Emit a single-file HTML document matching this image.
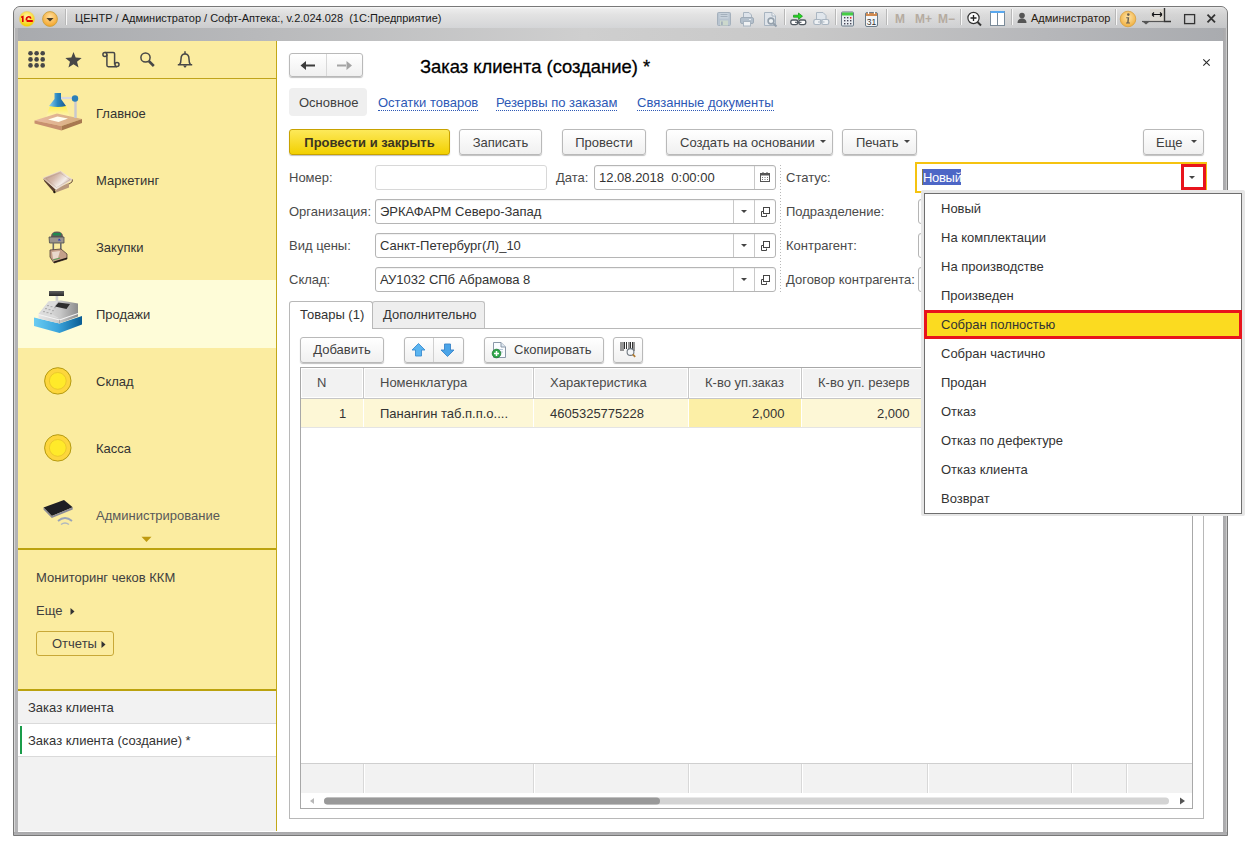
<!DOCTYPE html>
<html><head><meta charset="utf-8">
<style>
*{box-sizing:border-box;margin:0;padding:0}
html,body{width:1246px;height:844px;overflow:hidden;background:#fff;font-family:"Liberation Sans",sans-serif;font-size:13px;color:#333}
.a{position:absolute}
.t{position:absolute;white-space:nowrap;line-height:14px}
#win{left:13px;top:6px;width:1215px;height:830px;border:1px solid #787878;border-radius:7px 7px 0 0;background:#b2b2b4;overflow:hidden}
#ttl{left:0;top:0;width:1213px;height:21px;background:linear-gradient(90deg,rgba(0,0,0,.07),rgba(0,0,0,0) 35%,rgba(0,0,0,0) 65%,rgba(0,0,0,.07)),linear-gradient(#fbfbfb,#ececec 2px,#e2e2e2 8px,#d4d5d7 21px)}
#band{left:0;top:21px;width:1213px;height:14px;background:linear-gradient(90deg,#a8aaae,#b8b9bb 20%,#cfcfcf 47%,#c8c8c8 65%,#b6b7ba 85%,#a9abaf)}
#lf{left:0;top:21px;width:4px;height:808px;background:linear-gradient(90deg,#d6d6d6 0,#d6d6d6 1px,#b4b4b6 1px)}
#rf{left:1209px;top:21px;width:4px;height:808px;background:linear-gradient(90deg,#a8a8aa 0,#b0b0b2 3px,#cacaca 3px)}
#bf{left:0;top:825px;width:1213px;height:4px;background:linear-gradient(#a8a8aa,#b2b2b4 3px,#cccccc 3px)}
#client{left:18px;top:41px;width:1205px;height:791px;background:#fff}
#side{left:18px;top:41px;width:259px;height:790px;background:#fbeca0;border-right:1px solid #c2a818}
.sep{position:absolute;width:1px;background:#b8b8b8;box-shadow:1px 0 0 #f8f8f8}
.wt{font-family:"Liberation Sans",sans-serif;font-size:11px;color:#1a1a1a}
.m{font-weight:bold;font-size:12px;color:#b5aba0}
.side-t{position:absolute;left:96px;font-size:13px;color:#333;white-space:nowrap;line-height:14px}
.hline{position:absolute;height:2px;background:#bba20e}

.btn{position:absolute;height:25px;border:1px solid #b9b9b9;border-radius:3px;background:linear-gradient(#ffffff,#f0f0f0);box-shadow:0 1px 1px rgba(0,0,0,0.25);color:#404040;font-size:13px;line-height:23px;text-align:center;white-space:nowrap}
.inp{position:absolute;height:25px;border:1px solid #b5b5b5;border-radius:3px;background:#fff;box-shadow:inset 0 1px 1px rgba(0,0,0,0.06)}
.lbl{position:absolute;white-space:nowrap;line-height:14px;color:#4a4a4a}
.val{position:absolute;white-space:nowrap;line-height:14px;color:#333}
.lnk{position:absolute;white-space:nowrap;line-height:14px;color:#2d58b5;border-bottom:1px dotted #2d58b5;padding-bottom:0px}
.vdiv{position:absolute;width:1px;background:#c8c8c8}
.dd{position:absolute;width:0;height:0;border-left:3px solid transparent;border-right:3px solid transparent;border-top:3px solid #444}
</style></head><body>
<div id="win" class="a"><div id="ttl" class="a"></div><div id="band" class="a"></div><div id="lf" class="a"></div><div id="rf" class="a"></div><div id="bf" class="a"></div></div>
<div id="client" class="a"></div>
<div id="side" class="a"></div>

<!-- TITLE BAR -->
<svg class="a" style="left:18px;top:10px" width="20" height="18" viewBox="0 0 20 18">
 <defs><radialGradient id="g1c" cx="50%" cy="35%" r="60%"><stop offset="0" stop-color="#fff6b0"/><stop offset="1" stop-color="#f5d000"/></radialGradient>
 <radialGradient id="gdd" cx="50%" cy="35%" r="60%"><stop offset="0" stop-color="#ffe0a0"/><stop offset="1" stop-color="#f5a830"/></radialGradient></defs>
 <circle cx="9" cy="9" r="7.6" fill="url(#g1c)" stroke="#e8c870" stroke-width="0.6"/>
 <path d="M3 6.6 L5.6 5.4 V12 H4 V7.6 L3 8Z" fill="#e00000"/>
 <path d="M7.6 10.6 Q7.2 6.4 10.6 6 Q13.2 5.9 13.6 8.4 L12 8.8 Q11.6 7.4 10.6 7.5 Q9.1 7.7 9.3 10.2Z" fill="#e00000"/>
 <rect x="8.6" y="10" width="6.2" height="2" fill="#e00000"/>
</svg>
<svg class="a" style="left:41px;top:10px" width="20" height="18" viewBox="0 0 20 18">
 <circle cx="9" cy="9" r="7.4" fill="url(#gdd)" stroke="#c8a040" stroke-width="0.9"/>
 <path d="M5.4 8 L12.6 8 L9 11.6Z" fill="#4a3c28"/>
</svg>
<div class="sep" style="left:65px;top:9px;height:16px"></div>
<div class="t wt" style="left:75px;top:11px">ЦЕНТР / Администратор / Софт-Аптека:, v.2.024.028&nbsp; (1С:Предприятие)</div>

<!-- title right icons -->
<svg class="a" style="left:716px;top:11px" width="240" height="17" viewBox="0 0 240 17">
 <!-- save -->
 <rect x="1.5" y="1.5" width="13" height="13" rx="1" fill="#b8c4d0" stroke="#a4b0bc"/>
 <rect x="3.5" y="2" width="9" height="5.5" fill="#c8d2dc"/>
 <path d="M4.5 3.5 H11.5 M4.5 5.5 H11.5" stroke="#a4b0bc" stroke-width="1"/>
 <rect x="4" y="9.5" width="8" height="5" fill="#ccd8cc"/>
 <rect x="5" y="10.5" width="1.8" height="3.5" fill="#a4b0bc"/>
 <!-- print -->
 <path d="M27.5 1.5 H33 L35.5 4 V7 H27.5Z" fill="#dde3ea" stroke="#a8b4c0"/>
 <rect x="24.5" y="6.5" width="13" height="6" rx="1.5" fill="#b4c0cc" stroke="#a0acb8"/>
 <rect x="27.5" y="10.5" width="7" height="4.5" fill="#f0f2f4" stroke="#a8b4c0"/>
 <path d="M33 8.5 H35" stroke="#e8ecf0" stroke-width="1"/>
 <!-- preview -->
 <path d="M48.5 1.5 H56 L59.5 5 V14.5 H48.5Z" fill="#dfe4ea" stroke="#a8b4c0"/>
 <path d="M56 1.5 V5 H59.5" fill="#f4f6f8" stroke="#a8b4c0"/>
 <circle cx="55" cy="10" r="2.9" fill="#eef2f4" stroke="#94a0ac" stroke-width="1.6"/>
 <path d="M57.2 12.2 L60.5 15.5" stroke="#94a0ac" stroke-width="2"/>
 <!-- link green -->
 <path d="M77.5 4.2 H82.5 V2 L86.5 5.2 L82.5 8.4 V6.2 H77.5Z" fill="#22dd22" stroke="#148a14" stroke-width="0.7"/>
 <rect x="74.8" y="9" width="7" height="4.6" rx="1.8" fill="#fff" stroke="#505860" stroke-width="1.3"/>
 <rect x="82.8" y="9" width="7" height="4.6" rx="1.8" fill="#fff" stroke="#505860" stroke-width="1.3"/>
 <path d="M79 11.3 H85.5" stroke="#505860" stroke-width="1.1"/>
 <!-- link gray -->
 <path d="M100.5 1.5 H107 L110 4.5 V9 H100.5Z" fill="#e0e6ec" stroke="#aab6c2"/>
 <rect x="97.8" y="8.5" width="7" height="5" rx="1.8" fill="#eef1f4" stroke="#a8b4c0" stroke-width="1.2"/>
 <rect x="105.8" y="8.5" width="7" height="5" rx="1.8" fill="#eef1f4" stroke="#a8b4c0" stroke-width="1.2"/>
 <path d="M102 11 H108.5" stroke="#a8b4c0" stroke-width="1"/>
 <!-- calc -->
 <rect x="125.5" y="1" width="12" height="14" rx="1" fill="#e8ecf0" stroke="#6a7a88"/>
 <rect x="126" y="1.5" width="11" height="3" fill="#44cc44"/>
 <g fill="#445"><rect x="128" y="6" width="1.4" height="1.4"/><rect x="131" y="6" width="1.4" height="1.4"/><rect x="128" y="9" width="1.4" height="1.4"/><rect x="131" y="9" width="1.4" height="1.4"/><rect x="134" y="9" width="1.4" height="1.4"/><rect x="128" y="12" width="1.4" height="1.4"/><rect x="131" y="12" width="1.4" height="1.4"/><rect x="134" y="12" width="1.4" height="1.4"/></g>
 <rect x="134" y="6" width="1.4" height="1.6" fill="#e22"/>
 <!-- calendar -->
 <rect x="149.5" y="1.5" width="12" height="14" rx="1.5" fill="#f4f6f8" stroke="#6a7a88"/>
 <rect x="150" y="2" width="11" height="3" fill="#d08a50"/><path d="M152.5 0.5 V3 M158.5 0.5 V3" stroke="#fff" stroke-width="1.2"/>
 <text x="155.5" y="13.6" font-family="Liberation Sans" font-size="8.5" text-anchor="middle" fill="#333">31</text>
</svg>
<div class="sep" style="left:784px;top:9px;height:16px"></div>
<div class="sep" style="left:835px;top:9px;height:16px"></div>
<div class="sep" style="left:886px;top:9px;height:16px"></div>
<div class="t m" style="left:895px;top:12px">M</div>
<div class="t m" style="left:915px;top:12px">M+</div>
<div class="t m" style="left:938px;top:12px">M&#8722;</div>
<div class="sep" style="left:960px;top:9px;height:16px"></div>
<svg class="a" style="left:965px;top:10px" width="50" height="18" viewBox="0 0 50 18">
 <circle cx="8.5" cy="8" r="5.6" fill="#fafafa" stroke="#333" stroke-width="1.2"/>
 <path d="M8.5 5 V11 M5.5 8 H11.5" stroke="#222" stroke-width="1.3"/>
 <path d="M12.5 12 L16 15.5" stroke="#333" stroke-width="2"/>
 <rect x="25.5" y="1.5" width="14" height="14" fill="#fff" stroke="#7a8a98"/>
 <rect x="25.5" y="1" width="14" height="2" fill="#58a8f0"/>
 <path d="M32.5 3 V15.5" stroke="#7a8a98"/>
</svg>
<div class="sep" style="left:1011px;top:9px;height:16px"></div>
<svg class="a" style="left:1017px;top:12px" width="11" height="12" viewBox="0 0 11 12">
 <circle cx="5" cy="3.6" r="2.8" fill="#555"/>
 <path d="M0.5 11 Q0.5 6.5 5 6.5 Q9.5 6.5 9.5 11Z" fill="#555"/>
</svg>
<div class="t wt" style="left:1031px;top:11px;color:#2a2010">Администратор</div>
<div class="sep" style="left:1115px;top:9px;height:16px"></div>
<svg class="a" style="left:1119px;top:10px" width="18" height="18" viewBox="0 0 18 18">
 <defs><radialGradient id="ginf" cx="50%" cy="40%" r="60%"><stop offset="0" stop-color="#ffe4a8"/><stop offset="1" stop-color="#f0b040"/></radialGradient></defs>
 <circle cx="9" cy="9" r="7.8" fill="url(#ginf)" stroke="#d8a040" stroke-width="0.8"/>
 <circle cx="9.3" cy="4.6" r="1.3" fill="#6a6050"/>
 <path d="M7.2 7.2 H10.2 L9.6 12.6 H11 V13.6 H7 V12.6 H8.2 L8.6 8.2 H7.2Z" fill="#6a6050"/>
</svg>
<svg class="a" style="left:1140px;top:7px" width="34" height="20" viewBox="0 0 34 20">
 <rect x="10" y="2" width="14" height="12" fill="#dcd8d0"/>
 <path d="M12 7.5 H22 M12 7.5 L14 5.5 M12 7.5 L14 9.5 M22 7.5 L20 5.5 M22 7.5 L20 9.5" stroke="#111" stroke-width="1.1" fill="none"/>
 <path d="M24.5 1 V14.5 H31" stroke="#333" stroke-width="1.4" fill="none"/>
 <path d="M2 14.5 H24" stroke="#555" stroke-width="1.2"/>
 <path d="M3 15 L9 15 L6 17.5Z" fill="#555"/>
</svg>
<svg class="a" style="left:1183px;top:13px" width="36" height="13" viewBox="0 0 36 13">
 <rect x="1.6" y="1.6" width="10" height="9" fill="none" stroke="#333" stroke-width="1.3"/>
 <path d="M24.5 1.6 L32 9.4 M32 1.6 L24.5 9.4" stroke="#333" stroke-width="1.8"/>
</svg>

<!-- SIDEBAR -->
<svg class="a" style="left:24px;top:47px" width="175" height="26" viewBox="24 47 175 26">
 <g fill="#474747">
  <circle cx="30.5" cy="53.3" r="2.3"/><circle cx="36.6" cy="53.3" r="2.3"/><circle cx="42.7" cy="53.3" r="2.3"/>
  <circle cx="30.5" cy="59.4" r="2.3"/><circle cx="36.6" cy="59.4" r="2.3"/><circle cx="42.7" cy="59.4" r="2.3"/>
  <circle cx="30.5" cy="65.4" r="2.3"/><circle cx="36.6" cy="65.4" r="2.3"/><circle cx="42.7" cy="65.4" r="2.3"/>
  <path d="M73.50 52.00 L75.67 57.61 L81.68 57.94 L77.02 61.74 L78.55 67.56 L73.50 64.30 L68.45 67.56 L69.98 61.74 L65.32 57.94 L71.33 57.61Z"/>
 </g>
 <g fill="none" stroke="#474747" stroke-width="1.5">
  <circle cx="104.9" cy="54.4" r="2"/>
  <path d="M104.9 52.4 H113.2 Q114.6 52.4 114.6 53.8 V64.6"/>
  <path d="M106.9 54.4 V65.3 Q106.9 66.7 108.3 66.7 H117"/>
  <circle cx="117" cy="64.6" r="2"/>
  <circle cx="145.5" cy="57.5" r="4.6"/>
  <path d="M148.8 61 L153.8 66" stroke-width="2.6"/>
  <path d="M177.8 64.8 H192.2 M179.5 64.8 Q181 63 181 59 Q181 54 185 54 Q189 54 189 59 Q189 63 190.5 64.8"/>
  <path d="M185 51.2 V54"/>
 </g>
 <path d="M183 65.5 H187 L185 68Z" fill="#474747"/>
</svg>
<div class="hline" style="left:18px;top:78px;width:258px;height:1px;background:#c0a41a"></div>

<div class="a" style="left:18px;top:280px;width:258px;height:68px;background:#fefcd8"></div>

<div class="side-t" style="top:107px">Главное</div>
<div class="side-t" style="top:174px">Маркетинг</div>
<div class="side-t" style="top:241px">Закупки</div>
<div class="side-t" style="top:308px">Продажи</div>
<div class="side-t" style="top:375px">Склад</div>
<div class="side-t" style="top:442px">Касса</div>
<div class="side-t" style="top:509px;color:#585858">Администрирование</div>
<svg class="a" style="left:141px;top:536px" width="11" height="7"><path d="M0.5 0.8 H10.5 L5.5 6Z" fill="#bf9a10"/></svg>
<div class="hline" style="left:18px;top:548px;width:258px"></div>
<div class="t" style="left:36px;top:571px;color:#404040">Мониторинг чеков ККМ</div>
<div class="t" style="left:36px;top:604px;color:#404040">Еще</div>
<svg class="a" style="left:70px;top:608px" width="5" height="7"><path d="M0.5 0 L4.5 3.5 L0.5 7Z" fill="#333"/></svg>
<div class="a" style="left:36px;top:631px;width:78px;height:25px;border:1px solid #c8a838;border-radius:3px;background:#fbeca0"></div>
<div class="t" style="left:52px;top:637px;color:#404040">Отчеты</div>
<svg class="a" style="left:101px;top:641px" width="5" height="7"><path d="M0.5 0 L4.5 3.5 L0.5 7Z" fill="#333"/></svg>
<div class="hline" style="left:18px;top:689px;width:258px"></div>
<div class="a" style="left:18px;top:691px;width:258px;height:140px;background:#f2f2f2"></div>
<div class="a" style="left:18px;top:723px;width:258px;height:1px;background:#dadada"></div>
<div class="a" style="left:18px;top:724px;width:258px;height:32px;background:#fff"></div>
<div class="a" style="left:18px;top:756px;width:258px;height:1px;background:#dadada"></div>
<div class="a" style="left:20px;top:726px;width:2px;height:28px;background:#1a9c4a"></div>
<div class="t" style="left:28px;top:701px;color:#333">Заказ клиента</div>
<div class="t" style="left:28px;top:734px;color:#333">Заказ клиента (создание) *</div>

<!-- SIDEBAR ICONS -->
<svg class="a" style="left:30px;top:88px" width="56" height="48" viewBox="30 88 56 48">
 <defs>
  <linearGradient id="lcone" x1="0" y1="0" x2="0" y2="1"><stop offset="0" stop-color="#ffee40" stop-opacity="0.9"/><stop offset="1" stop-color="#fff8c0" stop-opacity="0.6"/></linearGradient>
  <linearGradient id="lshade" x1="0" y1="0" x2="1" y2="0"><stop offset="0" stop-color="#8cd0f0"/><stop offset="0.5" stop-color="#2a88c0"/><stop offset="1" stop-color="#1a5a90"/></linearGradient>
  <linearGradient id="board" x1="0" y1="0" x2="1" y2="0"><stop offset="0" stop-color="#e8b8a0"/><stop offset="1" stop-color="#d8b080"/></linearGradient>
 </defs>
 <path d="M50 106 L66 106 L70 117 L46 117Z" fill="url(#lcone)"/>
 <path d="M34.5 120.5 L57 113.5 L82 119 L61.5 126Z" fill="url(#board)"/>
 <path d="M34.5 120.5 V123.5 L61.5 130.5 V126Z" fill="#c89070"/>
 <path d="M61.5 126 V130.5 L82 123 V119Z" fill="#a87850"/>
 <path d="M48 119.5 L57.5 116.5 L68 118.5 L58.5 122Z" fill="#fffef0"/>
 <path d="M61 98 H75" stroke="#d8d8e0" stroke-width="2.2"/>
 <path d="M75.5 99 V118" stroke="#c8c8d0" stroke-width="2.4"/>
 <circle cx="75" cy="98.5" r="3.2" fill="#2a80b8"/>
 <path d="M54.5 93 H61 V99 L66 106 Q58 108 49 106 L54.5 99Z" fill="url(#lshade)"/>
</svg>
<svg class="a" style="left:40px;top:168px" width="36" height="28" viewBox="40 168 36 28">
 <defs><linearGradient id="mkt" x1="0" y1="0" x2="1" y2="0.6"><stop offset="0" stop-color="#b48e7c"/><stop offset="0.45" stop-color="#d4b8aa"/><stop offset="0.75" stop-color="#f4eeea"/><stop offset="1" stop-color="#c0a090"/></linearGradient></defs>
 <path d="M56 188 L69 183 L69 187.5 L56 192.5Z" fill="#b8987c"/>
 <path d="M43 178 L44.5 181.5 L54 192.5 L56 189.5Z" fill="#5a4030"/>
 <path d="M43 178 L60.5 171 L72.5 179.5 L56 189.5Z" fill="url(#mkt)" stroke="#f0e4dc" stroke-width="0.6"/>
 <path d="M46 178.5 L60 172.8 L70 179.6 L56.5 187.5Z" fill="none" stroke="#a88878" stroke-width="0.5" opacity="0.6"/>
 <path d="M72.5 179.5 L72 182 L69 184" fill="none" stroke="#6a5040" stroke-width="1"/>
 <circle cx="54.5" cy="192" r="1.2" fill="#201810"/>
</svg>
<svg class="a" style="left:46px;top:229px" width="24" height="36" viewBox="46 229 24 36">
 <path d="M51 237 Q51 231.5 57 231.5 Q63 231.5 63 237Z" fill="#605a58"/>
 <rect x="53" y="233" width="8" height="2.5" fill="#208850"/>
 <path d="M49 237 H64 V243 H49.5Z" fill="#9a948e" stroke="#4a4a4a" stroke-width="0.8"/>
 <path d="M59 238.5 L61 240.5 H58Z" fill="#2030c0"/>
 <rect x="52.5" y="243" width="1.6" height="8" fill="#6a6a6a"/>
 <rect x="60" y="243" width="1.6" height="8" fill="#6a6a6a"/>
 <path d="M50 250 L61 249 L67 254 V259 L54 263 L50 257Z" fill="#c4a08a"/>
 <path d="M52 252 L60 251 L58 258 L53 259Z" fill="#e8d8cc"/>
 <path d="M50 250 L61 249 L67 254 V259 L54 263 L50 257Z" fill="none" stroke="#504038" stroke-width="0.8"/>
 <path d="M54 261.5 L67 257.5 V259 L54 263Z" fill="#201810"/>
 <path d="M53 260 L60 258" stroke="#40a050" stroke-width="0.8"/>
</svg>
<svg class="a" style="left:32px;top:289px" width="52" height="46" viewBox="32 289 52 46">
 <defs>
  <linearGradient id="reg" x1="0" y1="0" x2="1" y2="0"><stop offset="0" stop-color="#e8e8e8"/><stop offset="0.55" stop-color="#c8c8c8"/><stop offset="1" stop-color="#8c8c8c"/></linearGradient>
  <linearGradient id="drw" x1="0" y1="0" x2="1" y2="0"><stop offset="0" stop-color="#6accf2"/><stop offset="0.5" stop-color="#3aa4dc"/><stop offset="1" stop-color="#0a5c94"/></linearGradient>
  <linearGradient id="disp" x1="0" y1="0" x2="0" y2="1"><stop offset="0" stop-color="#606060"/><stop offset="1" stop-color="#282828"/></linearGradient>
 </defs>
 <rect x="49" y="291" width="15" height="5" fill="url(#disp)"/>
 <rect x="55.6" y="296" width="2.6" height="4.8" fill="#d0d0d0"/>
 <path d="M34 317.5 L59.5 323.5 L82 316 V324.5 L59.5 333 L34 326Z" fill="url(#drw)"/>
 <path d="M38.5 314 L48.5 301.5 L61 300.5 L78 303.5 V316.5 L59.5 323.5 L38.5 318.5Z" fill="url(#reg)"/>
 <path d="M38.5 314 L48.5 301.5 L58 301 L50 313 L59.5 318.5 Z" fill="#dcdcdc"/>
 <g fill="#b0b0b0"><rect x="43" y="311" width="2" height="1.2"/><rect x="46.5" y="312" width="2" height="1.2"/><rect x="50" y="313" width="2" height="1.2"/><rect x="45" y="308" width="2" height="1.2"/><rect x="48.5" y="309" width="2" height="1.2"/><rect x="52" y="310" width="2" height="1.2"/><rect x="47" y="305" width="2" height="1.2"/><rect x="50.5" y="306" width="2" height="1.2"/><rect x="54" y="307" width="2" height="1.2"/></g>
 <path d="M55 306.5 L58.5 302.5 L70 304 L66.5 309Z" fill="#2e2e2e"/>
 <path d="M38.5 314.5 L59.5 320 L78 313.5" fill="none" stroke="#f4f4f4" stroke-width="1.1"/>
 <path d="M59.5 320 V323.5" stroke="#a0a0a0" stroke-width="0.8"/>
</svg>
<svg class="a" style="left:40px;top:365px" width="36" height="100" viewBox="40 365 36 100">
 <circle cx="57.8" cy="380.9" r="13.2" fill="#fdd63c" stroke="#b49a12" stroke-width="1"/>
 <circle cx="57.8" cy="380.9" r="8.4" fill="#ffea2a" stroke="#e6c428" stroke-width="0.8"/>
 <circle cx="57.8" cy="447.9" r="13.2" fill="#fdd63c" stroke="#b49a12" stroke-width="1"/>
 <circle cx="57.8" cy="447.9" r="8.4" fill="#ffea2a" stroke="#e6c428" stroke-width="0.8"/>
</svg>
<svg class="a" style="left:40px;top:497px" width="36" height="32" viewBox="40 497 36 32">
 <path d="M43.5 507.5 L64 500 L72.7 507.3 L51.8 516Z" fill="#1e1e24"/>
 <path d="M43.5 507.5 V509.5 L51.8 518 L72.7 509.5 V507.3 L51.8 516Z" fill="#8a8a98"/>
 <path d="M58 521 Q65 515 72 521" fill="none" stroke="#9aa4b8" stroke-width="1.8"/>
 <path d="M61 524.5 Q65 521.5 69 524.5" fill="none" stroke="#b0b8c0" stroke-width="1.5"/>
</svg>

<!-- MAIN FORM -->
<div class="btn" style="left:289px;top:53px;width:74px;height:24px"></div>
<div class="vdiv" style="left:326px;top:54px;height:22px;background:#d8d8d8"></div>
<svg class="a" style="left:298px;top:59px" width="60" height="12">
 <path d="M7 5.4 H17 V7.6 H7Z M2.5 6.5 L8 2 V11Z" fill="#3c3c3c"/>
 <path d="M39 5.4 H49 V7.6 H39Z M54 6.5 L48.5 2 V11Z" fill="#a4a4a4"/>
</svg>
<div class="t" style="left:420px;top:57px;font-size:18.4px;line-height:20px;color:#000;-webkit-text-stroke:0.3px #000">Заказ клиента (создание) *</div>
<svg class="a" style="left:1202px;top:58px" width="10" height="10"><path d="M1.3 1.3 L7.7 7.7 M7.7 1.3 L1.3 7.7" stroke="#2a2a2a" stroke-width="1.1"/></svg>

<div class="a" style="left:289px;top:88px;width:78px;height:28px;background:#efefef;border-radius:4px"></div>
<div class="val" style="left:299px;top:96px;color:#404040">Основное</div>
<div class="lnk" style="left:378px;top:96px">Остатки товаров</div>
<div class="lnk" style="left:496px;top:96px">Резервы по заказам</div>
<div class="lnk" style="left:637px;top:96px">Связанные документы</div>

<div class="btn" style="left:289px;top:129px;height:26px;line-height:26px;width:161px;border-color:#c8a200;background:linear-gradient(#fde95a,#f2d000);font-weight:bold;color:#3b3520">Провести и закрыть</div>
<div class="btn" style="left:459px;top:129px;height:26px;line-height:26px;width:83px">Записать</div>
<div class="btn" style="left:562px;top:129px;height:26px;line-height:26px;width:84px">Провести</div>
<div class="btn" style="left:666px;top:129px;height:26px;line-height:26px;width:167px;text-align:left;padding-left:13px">Создать на основании</div>
<div class="dd" style="left:820px;top:140px"></div>
<div class="btn" style="left:842px;top:129px;height:26px;line-height:26px;width:75px;text-align:left;padding-left:13px">Печать</div>
<div class="dd" style="left:904px;top:140px"></div>
<div class="btn" style="left:1143px;top:129px;height:26px;line-height:26px;width:61px;text-align:left;padding-left:12px">Еще</div>
<div class="dd" style="left:1191px;top:140px"></div>

<div class="lbl" style="left:289px;top:171px">Номер:</div>
<div class="inp" style="left:375px;top:165px;width:172px;height:25px;border-color:#d8d8d8;box-shadow:none"></div>
<div class="lbl" style="left:556px;top:171px">Дата:</div>
<div class="inp" style="left:594px;top:165px;width:182px;height:25px"></div>
<div class="vdiv" style="left:754px;top:166px;height:23px"></div>
<svg class="a" style="left:760px;top:172px" width="10" height="10"><rect x="0.5" y="1.5" width="9" height="8" fill="#fff" stroke="#555"/><rect x="0.5" y="1.5" width="9" height="2" fill="#555"/><g fill="#777"><rect x="2" y="5" width="1" height="1"/><rect x="4.5" y="5" width="1" height="1"/><rect x="7" y="5" width="1" height="1"/><rect x="2" y="7" width="1" height="1"/><rect x="4.5" y="7" width="1" height="1"/><rect x="7" y="7" width="1" height="1"/></g><path d="M3 0 V2 M7 0 V2" stroke="#555"/></svg>
<div class="val" style="left:599px;top:171px">12.08.2018&nbsp; 0:00:00</div>

<div class="lbl" style="left:289px;top:205px">Организация:</div>
<div class="inp" style="left:375px;top:199px;width:401px;height:25px"></div>
<div class="val" style="left:380px;top:205px">ЭРКАФАРМ Северо-Запад</div>
<div class="lbl" style="left:289px;top:239px">Вид цены:</div>
<div class="inp" style="left:375px;top:233px;width:401px;height:25px"></div>
<div class="val" style="left:380px;top:239px">Санкт-Петербург(Л)_10</div>
<div class="lbl" style="left:289px;top:273px">Склад:</div>
<div class="inp" style="left:375px;top:267px;width:401px;height:25px"></div>
<div class="val" style="left:380px;top:273px">АУ1032 СПб Абрамова 8</div>
<div class="vdiv" style="left:733px;top:200px;height:23px"></div><div class="vdiv" style="left:754px;top:200px;height:23px"></div><div class="dd" style="left:741px;top:210px"></div><svg class="a" style="left:760px;top:206px" width="11" height="11"><path d="M3.5 5.5 H1.5 V10.5 H6.5 V8.5" fill="none" stroke="#444"/><rect x="3.5" y="1.5" width="6" height="6" fill="#fff" stroke="#444"/></svg>
<div class="vdiv" style="left:733px;top:234px;height:23px"></div><div class="vdiv" style="left:754px;top:234px;height:23px"></div><div class="dd" style="left:741px;top:244px"></div><svg class="a" style="left:760px;top:240px" width="11" height="11"><path d="M3.5 5.5 H1.5 V10.5 H6.5 V8.5" fill="none" stroke="#444"/><rect x="3.5" y="1.5" width="6" height="6" fill="#fff" stroke="#444"/></svg>
<div class="vdiv" style="left:733px;top:268px;height:23px"></div><div class="vdiv" style="left:754px;top:268px;height:23px"></div><div class="dd" style="left:741px;top:278px"></div><svg class="a" style="left:760px;top:274px" width="11" height="11"><path d="M3.5 5.5 H1.5 V10.5 H6.5 V8.5" fill="none" stroke="#444"/><rect x="3.5" y="1.5" width="6" height="6" fill="#fff" stroke="#444"/></svg>

<div class="a" style="left:780px;top:165px;width:1px;height:128px;background-image:linear-gradient(#b8b8b8 50%,transparent 50%);background-size:1px 3px"></div>
<div class="lbl" style="left:786px;top:171px">Статус:</div>
<div class="lbl" style="left:786px;top:205px">Подразделение:</div>
<div class="lbl" style="left:786px;top:239px">Контрагент:</div>
<div class="lbl" style="left:786px;top:273px">Договор контрагента:</div>
<div class="inp" style="left:918px;top:199px;width:20px;height:25px"></div>
<div class="inp" style="left:918px;top:233px;width:20px;height:25px"></div>
<div class="inp" style="left:918px;top:267px;width:20px;height:25px"></div>
<div class="a" style="left:915px;top:162px;width:292px;height:31px;border:2px solid #f5c310;border-right-width:1px;background:#fff"></div>
<div class="a" style="left:922px;top:169px;width:39px;height:16px;background:#4d66c6"></div>
<div class="val" style="left:923px;top:171px;color:#fff;letter-spacing:-0.3px">Новый</div>
<div class="a" style="left:922px;top:169px;width:1px;height:16px;background:#8a7a40"></div>
<div class="a" style="left:1181px;top:164px;width:25px;height:26px;border:3px solid #e8141c"></div>
<div class="dd" style="left:1189px;top:176px"></div>

<!-- PAGES -->
<div class="a" style="left:289px;top:328px;width:915px;height:491px;border:1px solid #b8b8b8;border-top-color:#b8b8b8"></div>
<div class="a" style="left:372px;top:301px;width:113px;height:27px;background:#eeeeee;border:1px solid #c0c0c0;border-bottom:none;border-radius:3px 3px 0 0"></div>
<div class="a" style="left:289px;top:301px;width:84px;height:28px;background:#fff;border:1px solid #b8b8b8;border-bottom:none;border-radius:3px 3px 0 0"></div>
<div class="val" style="left:300px;top:308px">Товары (1)</div>
<div class="val" style="left:383px;top:308px">Дополнительно</div>

<div class="btn" style="left:300px;top:337px;width:84px;height:26px;line-height:24px">Добавить</div>
<div class="btn" style="left:404px;top:337px;width:60px;height:26px"></div>
<div class="vdiv" style="left:433px;top:338px;height:24px;background:#d0d0d0"></div>
<svg class="a" style="left:410px;top:342px" width="48" height="16">
 <path d="M8.5 1.5 L15 8 H11.5 V14 H5.5 V8 H2Z" fill="#5ab4f0" stroke="#3a8cd0" stroke-width="0.9" stroke-linejoin="round"/>
 <path d="M37.5 14.5 L44 8 H40.5 V2 H34.5 V8 H31Z" fill="#4aa4e8" stroke="#3a84c8" stroke-width="0.9" stroke-linejoin="round"/>
</svg>
<div class="btn" style="left:484px;top:337px;width:120px;height:26px;line-height:24px;text-align:left;padding-left:29px">Скопировать</div>
<svg class="a" style="left:490px;top:340px" width="18" height="19">
 <path d="M3.5 2.5 H11 L15.5 7 V17.5 H3.5Z" fill="#fafcff" stroke="#8a98a8"/>
 <path d="M11 2.5 V7 H15.5" fill="#dde6f0" stroke="#8a98a8"/>
 <path d="M6 9.5 H13 M6 12 H13" stroke="#b8c8d8" stroke-width="1"/>
 <circle cx="6.5" cy="13.5" r="4.3" fill="#2fa84a" stroke="#1c7a30" stroke-width="0.8"/>
 <path d="M6.5 11 V16 M4 13.5 H9" stroke="#fff" stroke-width="1.5"/>
</svg>
<div class="btn" style="left:613px;top:337px;width:30px;height:26px"></div>
<svg class="a" style="left:619px;top:340px" width="18" height="19">
 <path d="M2 2 V11 M4 2 V11 M5.5 2 V9 M7.5 2 V9 M10 2 V9 M11.5 2 V9 M13.5 2 V11 M15 2 V11" stroke="#333" stroke-width="1"/>
 <circle cx="11.5" cy="12" r="3.4" fill="#f4f6f8" stroke="#707880" stroke-width="1.1"/>
 <path d="M13.8 14.4 L16.2 16.8" stroke="#b07a30" stroke-width="1.8"/>
</svg>

<!-- TABLE -->
<div class="a" style="left:300px;top:367px;width:893px;height:442px;border:1px solid #a8a8a8;background:#fff"></div>
<div class="a" style="left:301px;top:368px;width:891px;height:31px;background:#fff;border-bottom:1px solid #c6c6c6"></div>
<div class="a" style="left:301px;top:399px;width:891px;height:29px;background:#fff;border-bottom:1px solid #e4e4e4"></div>
<div class="a" style="left:302px;top:369px;width:60px;height:28px;background:#f2f2f2"></div><div class="a" style="left:301px;top:399px;width:62px;height:28px;background:#fdf7d6"></div>
<div class="a" style="left:365px;top:369px;width:167px;height:28px;background:#f2f2f2"></div><div class="a" style="left:364px;top:399px;width:169px;height:28px;background:#fdf7d6"></div>
<div class="a" style="left:535px;top:369px;width:152px;height:28px;background:#f2f2f2"></div><div class="a" style="left:534px;top:399px;width:154px;height:28px;background:#fdf7d6"></div>
<div class="a" style="left:690px;top:369px;width:110px;height:28px;background:#f2f2f2"></div><div class="a" style="left:689px;top:399px;width:112px;height:28px;background:#fcefa6"></div>
<div class="a" style="left:803px;top:369px;width:123px;height:28px;background:#f2f2f2"></div><div class="a" style="left:802px;top:399px;width:125px;height:28px;background:#fdf7d6"></div>
<div class="a" style="left:929px;top:369px;width:141px;height:28px;background:#f2f2f2"></div>
<div class="a" style="left:1073px;top:369px;width:52px;height:28px;background:#f2f2f2"></div>
<div class="a" style="left:1128px;top:369px;width:63px;height:28px;background:#f2f2f2"></div>
<div class="a" style="left:363px;top:368px;width:1px;height:30px;background:#c8c8c8"></div>
<div class="a" style="left:533px;top:368px;width:1px;height:30px;background:#c8c8c8"></div>
<div class="a" style="left:688px;top:368px;width:1px;height:30px;background:#c8c8c8"></div>
<div class="a" style="left:801px;top:368px;width:1px;height:30px;background:#c8c8c8"></div>
<div class="a" style="left:927px;top:368px;width:1px;height:30px;background:#c8c8c8"></div>
<div class="a" style="left:1071px;top:368px;width:1px;height:30px;background:#c8c8c8"></div>
<div class="a" style="left:1126px;top:368px;width:1px;height:30px;background:#c8c8c8"></div>
<div class="a" style="left:301px;top:763px;width:891px;height:30px;background:#f2f2f2;border-top:1px solid #cfcfcf"></div>
<div class="a" style="left:363px;top:764px;width:2px;height:29px;border-left:1px solid #d8d8d8;border-right:1px solid #fff"></div>
<div class="a" style="left:533px;top:764px;width:2px;height:29px;border-left:1px solid #d8d8d8;border-right:1px solid #fff"></div>
<div class="a" style="left:688px;top:764px;width:2px;height:29px;border-left:1px solid #d8d8d8;border-right:1px solid #fff"></div>
<div class="a" style="left:801px;top:764px;width:2px;height:29px;border-left:1px solid #d8d8d8;border-right:1px solid #fff"></div>
<div class="a" style="left:927px;top:764px;width:2px;height:29px;border-left:1px solid #d8d8d8;border-right:1px solid #fff"></div>
<div class="a" style="left:1071px;top:764px;width:2px;height:29px;border-left:1px solid #d8d8d8;border-right:1px solid #fff"></div>
<div class="a" style="left:1126px;top:764px;width:2px;height:29px;border-left:1px solid #d8d8d8;border-right:1px solid #fff"></div>
<div class="val" style="left:317px;top:376px;color:#4a4a4a">N</div>
<div class="val" style="left:380px;top:376px;color:#4a4a4a">Номенклатура</div>
<div class="val" style="left:550px;top:376px;color:#4a4a4a">Характеристика</div>
<div class="val" style="left:705px;top:376px;color:#4a4a4a">К-во уп.заказ</div>
<div class="val" style="left:818px;top:376px;color:#4a4a4a">К-во уп. резерв</div>
<div class="val" style="left:339px;top:407px">1</div>
<div class="val" style="left:380px;top:407px">Панангин таб.п.п.о....</div>
<div class="val" style="left:550px;top:407px">4605325775228</div>
<div class="val" style="left:752px;top:407px">2,000</div>
<div class="val" style="left:877px;top:407px">2,000</div>
<svg class="a" style="left:308px;top:796px" width="880" height="10">
 <path d="M2 5 L6 2 V8Z" fill="#b8b8b8"/>
 <rect x="16" y="1.5" width="845" height="7" rx="3.5" fill="#d4d4d4"/>
 <rect x="16" y="1.5" width="336" height="7" rx="3.5" fill="#999"/>
 <path d="M877 5 L872 1.5 V8.5Z" fill="#555"/>
</svg>

<!-- DROPDOWN -->
<div class="a" style="left:921px;top:190px;width:324px;height:326px;background:#e6e6e6;border-radius:2px"></div>
<div class="a" style="left:924px;top:193px;width:318px;height:321px;background:#fff;border:1px solid #6e6e6e"></div>
<div class="a" style="left:924px;top:310px;width:318px;height:29px;background:#fbdb20;border:3px solid #e8141c"></div>
<div class="val" style="left:941px;top:202px;color:#333">Новый</div>
<div class="val" style="left:941px;top:231px;color:#333">На комплектации</div>
<div class="val" style="left:941px;top:260px;color:#333">На производстве</div>
<div class="val" style="left:941px;top:289px;color:#333">Произведен</div>
<div class="val" style="left:941px;top:318px;color:#333">Собран полностью</div>
<div class="val" style="left:941px;top:347px;color:#333">Собран частично</div>
<div class="val" style="left:941px;top:376px;color:#333">Продан</div>
<div class="val" style="left:941px;top:405px;color:#333">Отказ</div>
<div class="val" style="left:941px;top:434px;color:#333">Отказ по дефектуре</div>
<div class="val" style="left:941px;top:463px;color:#333">Отказ клиента</div>
<div class="val" style="left:941px;top:492px;color:#333">Возврат</div>

</body></html>
